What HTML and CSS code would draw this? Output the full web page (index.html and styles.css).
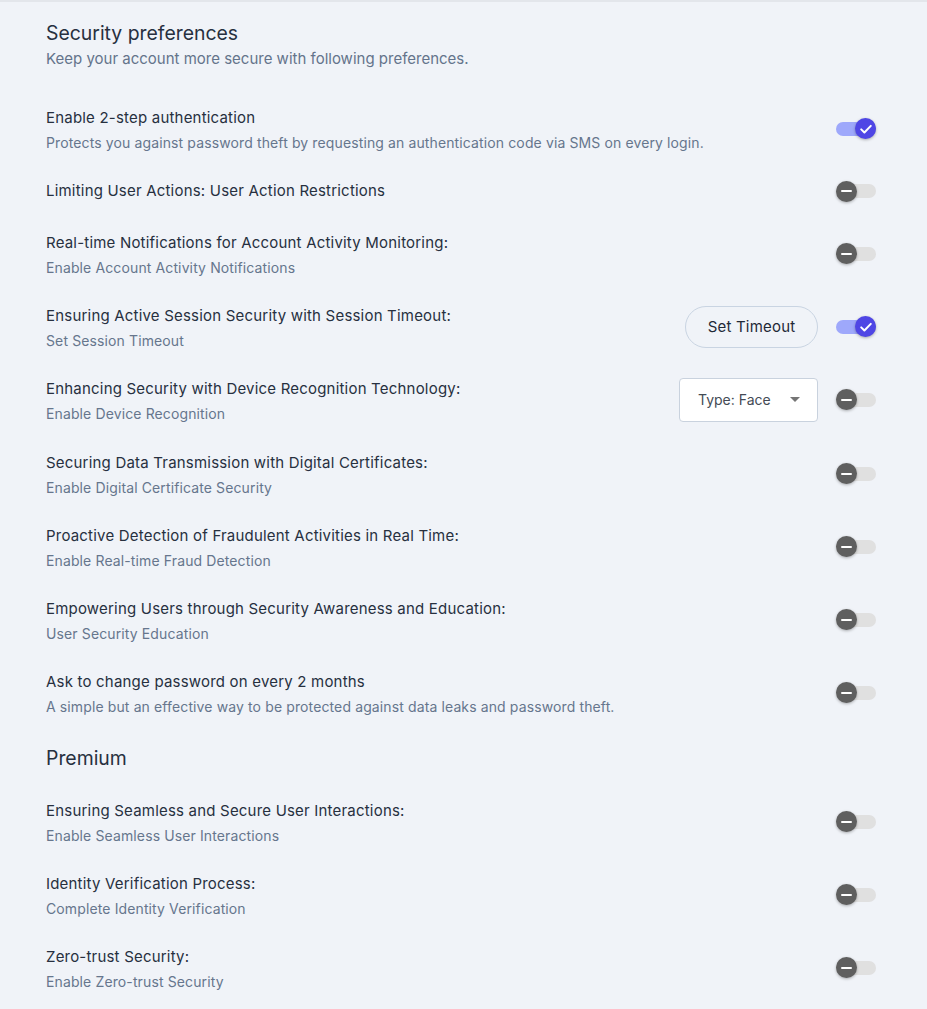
FILE: index.html
```html
<!DOCTYPE html>
<html lang="en">
<head>
<meta charset="utf-8">
<title>Security preferences</title>
<link rel="stylesheet" href="styles.css">
</head>
<body>
<main class="page">
  <header class="section-head">
    <h1 class="section-title">Security preferences</h1>
    <p class="section-sub">Keep your account more secure with following preferences.</p>
  </header>

  <ul class="pref-list">
    <li class="pref">
      <div class="pref-text">
        <div class="pref-label">Enable 2-step authentication</div>
        <div class="pref-desc">Protects you against password theft by requesting an authentication code via SMS on every login.</div>
      </div>
      <div class="pref-controls">
        <span class="switch is-on"><span class="track"></span><span class="thumb"><svg viewBox="0 0 20 20" width="20" height="20"><path d="M5.2 10.4l3.2 3.1 6.4-6.6" fill="none" stroke="#fff" stroke-width="2" stroke-linecap="round" stroke-linejoin="round"/></svg></span></span>
      </div>
    </li>
    <li class="pref">
      <div class="pref-text">
        <div class="pref-label">Limiting User Actions: User Action Restrictions</div>
      </div>
      <div class="pref-controls">
        <span class="switch"><span class="track"></span><span class="thumb"><span class="minus"></span></span></span>
      </div>
    </li>
    <li class="pref">
      <div class="pref-text">
        <div class="pref-label">Real-time Notifications for Account Activity Monitoring:</div>
        <div class="pref-desc">Enable Account Activity Notifications</div>
      </div>
      <div class="pref-controls">
        <span class="switch"><span class="track"></span><span class="thumb"><span class="minus"></span></span></span>
      </div>
    </li>
    <li class="pref">
      <div class="pref-text">
        <div class="pref-label">Ensuring Active Session Security with Session Timeout:</div>
        <div class="pref-desc">Set Session Timeout</div>
      </div>
      <div class="pref-controls">
        <button class="btn-outline" type="button">Set Timeout</button>
        <span class="switch is-on"><span class="track"></span><span class="thumb"><svg viewBox="0 0 20 20" width="20" height="20"><path d="M5.2 10.4l3.2 3.1 6.4-6.6" fill="none" stroke="#fff" stroke-width="2" stroke-linecap="round" stroke-linejoin="round"/></svg></span></span>
      </div>
    </li>
    <li class="pref pref-tall">
      <div class="pref-text">
        <div class="pref-label">Enhancing Security with Device Recognition Technology:</div>
        <div class="pref-desc">Enable Device Recognition</div>
      </div>
      <div class="pref-controls">
        <div class="select"><span>Type: Face</span><svg class="caret" viewBox="0 0 10 5" width="10" height="5"><path d="M0 0h10L5 5z" fill="#757575"/></svg></div>
        <span class="switch"><span class="track"></span><span class="thumb"><span class="minus"></span></span></span>
      </div>
    </li>
    <li class="pref">
      <div class="pref-text">
        <div class="pref-label">Securing Data Transmission with Digital Certificates:</div>
        <div class="pref-desc">Enable Digital Certificate Security</div>
      </div>
      <div class="pref-controls">
        <span class="switch"><span class="track"></span><span class="thumb"><span class="minus"></span></span></span>
      </div>
    </li>
    <li class="pref">
      <div class="pref-text">
        <div class="pref-label">Proactive Detection of Fraudulent Activities in Real Time:</div>
        <div class="pref-desc">Enable Real-time Fraud Detection</div>
      </div>
      <div class="pref-controls">
        <span class="switch"><span class="track"></span><span class="thumb"><span class="minus"></span></span></span>
      </div>
    </li>
    <li class="pref">
      <div class="pref-text">
        <div class="pref-label">Empowering Users through Security Awareness and Education:</div>
        <div class="pref-desc">User Security Education</div>
      </div>
      <div class="pref-controls">
        <span class="switch"><span class="track"></span><span class="thumb"><span class="minus"></span></span></span>
      </div>
    </li>
    <li class="pref">
      <div class="pref-text">
        <div class="pref-label">Ask to change password on every 2 months</div>
        <div class="pref-desc">A simple but an effective way to be protected against data leaks and password theft.</div>
      </div>
      <div class="pref-controls">
        <span class="switch"><span class="track"></span><span class="thumb"><span class="minus"></span></span></span>
      </div>
    </li>
  </ul>

  <h2 class="section-title premium">Premium</h2>

  <ul class="pref-list">
    <li class="pref">
      <div class="pref-text">
        <div class="pref-label">Ensuring Seamless and Secure User Interactions:</div>
        <div class="pref-desc">Enable Seamless User Interactions</div>
      </div>
      <div class="pref-controls">
        <span class="switch"><span class="track"></span><span class="thumb"><span class="minus"></span></span></span>
      </div>
    </li>
    <li class="pref">
      <div class="pref-text">
        <div class="pref-label">Identity Verification Process:</div>
        <div class="pref-desc">Complete Identity Verification</div>
      </div>
      <div class="pref-controls">
        <span class="switch"><span class="track"></span><span class="thumb"><span class="minus"></span></span></span>
      </div>
    </li>
    <li class="pref">
      <div class="pref-text">
        <div class="pref-label">Zero-trust Security:</div>
        <div class="pref-desc">Enable Zero-trust Security</div>
      </div>
      <div class="pref-controls">
        <span class="switch"><span class="track"></span><span class="thumb"><span class="minus"></span></span></span>
      </div>
    </li>
  </ul>
</main>
</body>
</html>
```

FILE: styles.css
```css
* { box-sizing: border-box; }

html, body {
  margin: 0;
  padding: 0;
  background: #f0f3f8;
}

body {
  font-family: Inter, "Noto Sans", "Liberation Sans", sans-serif;
  color: #1f2937;
  border-top: 2px solid #e3e6eb;
}

.page {
  padding: 17px 51px 0 46px;
}

.section-head {
  margin-bottom: 23px;
}

.section-title {
  margin: 0;
  font-size: 19.4px;
  line-height: 28px;
  font-weight: 400;
  color: #27303f;
}

.section-sub {
  margin: 2px 0 0;
  font-size: 15px;
  line-height: 20px;
  color: #64748b;
}

.premium {
  margin: 16px 0 14px;
  line-height: 26px;
}

.pref-list {
  list-style: none;
  margin: 0;
  padding: 0;
}

.pref {
  display: flex;
  align-items: center;
  justify-content: space-between;
  padding: 12px 0;
}

.pref-tall {
  padding-bottom: 13px;
}

.pref-label {
  font-size: 15px;
  line-height: 28px;
  letter-spacing: 0.2px;
  color: #27303f;
}

.pref-desc {
  font-size: 14px;
  line-height: 21px;
  letter-spacing: 0.12px;
  color: #66768d;
}

.pref-controls {
  display: flex;
  align-items: center;
  gap: 18px;
}

.btn-outline {
  font-family: inherit;
  font-size: 15px;
  letter-spacing: 0.2px;
  color: #1f2937;
  background: transparent;
  border: 1px solid #c9d4e2;
  border-radius: 21px;
  width: 133px;
  height: 42px;
  padding: 0;
  cursor: pointer;
}

.select {
  display: flex;
  align-items: center;
  justify-content: space-between;
  width: 139px;
  height: 44px;
  padding: 0 17px 0 18px;
  background: #fff;
  border: 1px solid #c9d2de;
  border-radius: 4px;
  font-size: 14px;
  color: #444b55;
}

.switch {
  position: relative;
  display: flex;
  align-items: center;
  width: 40px;
  height: 22px;
}

.switch .track {
  position: absolute;
  left: 0;
  right: 0;
  top: 4px;
  height: 14px;
  border-radius: 7px;
  background: #e0e0e0;
}

.switch .thumb {
  position: relative;
  display: flex;
  align-items: center;
  justify-content: center;
  width: 21px;
  height: 21px;
  border-radius: 50%;
  background: #5f5f5f;
  box-shadow: 0 1px 3px rgba(0, 0, 0, 0.3);
}

.switch.is-on {
  justify-content: flex-end;
}

.switch.is-on .track {
  background: #9ea8fb;
}

.switch.is-on .thumb {
  background: #4f46e5;
}

.minus {
  display: block;
  width: 11px;
  height: 2px;
  background: #fff;
  border-radius: 1px;
}
```
